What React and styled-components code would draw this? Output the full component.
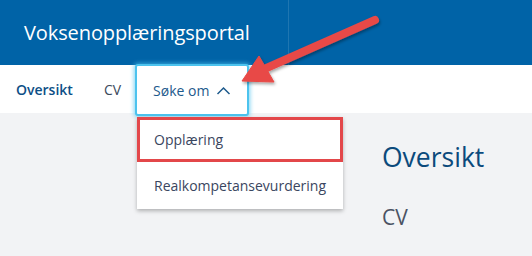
import React from 'react';
import styled, { createGlobalStyle } from 'styled-components';

const GlobalStyle = createGlobalStyle`
  html, body {
    margin: 0;
    padding: 0;
    background: #f2f3f5;
    font-family: "Open Sans", "Noto Sans", sans-serif;
  }
`;

const Page = styled.div`
  position: relative;
  width: 532px;
  height: 256px;
  overflow: hidden;
  background: #f2f3f5;
`;

const Header = styled.header`
  display: flex;
  height: 65px;
  background: #0063a7;
`;

const Brand = styled.div`
  display: flex;
  align-items: center;
  width: 264px;
  padding-left: 24px;
  border-right: 1px solid rgba(255, 255, 255, 0.12);
  color: #fff;
  font-size: 20px;
  letter-spacing: -0.1px;
`;

const Nav = styled.nav`
  position: relative;
  display: flex;
  align-items: stretch;
  height: 48px;
  padding-left: 16px;
  background: #fff;
`;

const NavLink = styled.div`
  display: flex;
  align-items: center;
  margin-right: ${(p) => p.$gap || 0}px;
  font-size: 14px;
  font-weight: ${(p) => (p.$active ? 600 : 400)};
  color: ${(p) => (p.$active ? '#0d4f86' : '#3b4a5c')};
`;

const MenuButton = styled.div`
  position: relative;
  z-index: 2;
  display: flex;
  align-items: center;
  gap: 7px;
  margin-top: -1px;
  margin-bottom: -3px;
  padding: 0 16px;
  background: #fff;
  border: 2px solid #4cc3ee;
  border-radius: 3px;
  box-shadow: 0 0 4px 1px rgba(76, 195, 238, 0.7);
  font-size: 14px;
  color: #1d5a8c;
`;

const Dropdown = styled.div`
  position: absolute;
  z-index: 3;
  top: 52px;
  left: 137px;
  width: 206px;
  background: #fff;
  box-shadow: 0 2px 4px rgba(0, 0, 0, 0.28);
`;

const DropItem = styled.div`
  display: flex;
  align-items: center;
  box-sizing: border-box;
  height: ${(p) => (p.$highlight ? 45 : 47)}px;
  padding-left: ${(p) => (p.$highlight ? 14 : 17)}px;
  border: ${(p) => (p.$highlight ? '3px solid #e3474a' : 'none')};
  font-size: 14px;
  color: #3a4660;
`;

const Main = styled.main`
  padding: 28px 0 0 382px;
`;

const Heading = styled.h1`
  margin: 0;
  font-size: 26.5px;
  font-weight: 400;
  line-height: 32px;
  color: #0b4a7c;
`;

const SubHeading = styled.h2`
  margin: 31px 0 0;
  font-size: 21px;
  font-weight: 400;
  line-height: 26px;
  color: #4a5263;
`;

const ArrowLayer = styled.svg`
  position: absolute;
  top: 0;
  left: 0;
  z-index: 5;
  pointer-events: none;
`;

function ChevronUp() {
  return (
    <svg width="15" height="9" viewBox="0 0 15 9">
      <path d="M1.5 8 L7.5 2 L13.5 8" fill="none" stroke="#1d5a8c" strokeWidth="1.5" />
    </svg>
  );
}

export default function App() {
  return (
    <Page>
      <GlobalStyle />
      <Header>
        <Brand>Voksenopplæringsportal</Brand>
      </Header>
      <Nav>
        <NavLink $active $gap={31}>Oversikt</NavLink>
        <NavLink $gap={14}>CV</NavLink>
        <MenuButton>
          Søke om
          <ChevronUp />
        </MenuButton>
        <Dropdown>
          <DropItem $highlight>Opplæring</DropItem>
          <DropItem>Realkompetansevurdering</DropItem>
        </Dropdown>
      </Nav>
      <Main>
        <Heading>Oversikt</Heading>
        <SubHeading>CV</SubHeading>
      </Main>
      <ArrowLayer width="532" height="256" viewBox="0 0 532 256">
        <defs>
          <filter id="sh" x="-20%" y="-20%" width="140%" height="140%">
            <feDropShadow dx="1" dy="2" stdDeviation="1.5" floodColor="#000" floodOpacity="0.35" />
          </filter>
        </defs>
        <g filter="url(#sh)" fill="#e84a47" stroke="#e84a47">
          <line x1="375" y1="20" x2="262" y2="70" strokeWidth="8" strokeLinecap="round" />
          <polygon points="242,81 259,56 274,82" strokeWidth="1" strokeLinejoin="round" />
        </g>
      </ArrowLayer>
    </Page>
  );
}
